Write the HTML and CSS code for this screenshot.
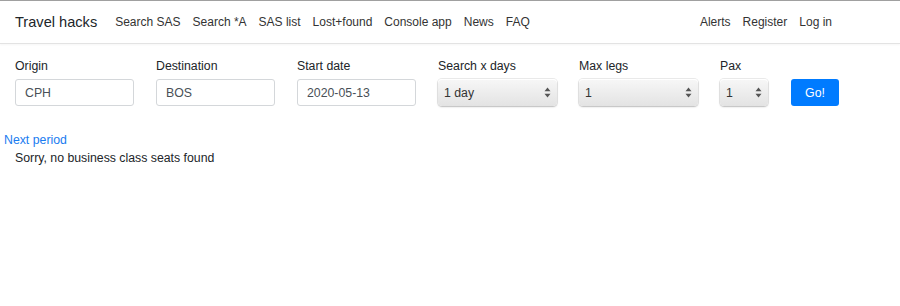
FILE: index.html
```html
<!DOCTYPE html>
<html lang="en">
<head>
    <meta charset="UTF-8">
    <meta name="viewport" content="width=device-width, initial-scale=1.0">
    <title>Travel hacks</title>
    <link rel="stylesheet" href="styles.css">
</head>
<body>
    <nav class="navbar">
        <a class="brand" href="#">Travel hacks</a>
        <ul class="nav-links">
            <li><a href="#">Search SAS</a></li>
            <li><a href="#">Search *A</a></li>
            <li><a href="#">SAS list</a></li>
            <li><a href="#">Lost+found</a></li>
            <li><a href="#">Console app</a></li>
            <li><a href="#">News</a></li>
            <li><a href="#">FAQ</a></li>
        </ul>
        <ul class="nav-links nav-right">
            <li><a href="#">Alerts</a></li>
            <li><a href="#">Register</a></li>
            <li><a href="#">Log in</a></li>
        </ul>
    </nav>

    <form class="search-form">
        <div class="field">
            <label for="origin">Origin</label>
            <input type="text" id="origin" value="CPH">
        </div>
        <div class="field">
            <label for="destination">Destination</label>
            <input type="text" id="destination" value="BOS">
        </div>
        <div class="field">
            <label for="start-date">Start date</label>
            <input type="text" id="start-date" value="2020-05-13">
        </div>
        <div class="field">
            <label for="days">Search x days</label>
            <div class="select-wrap">
                <select id="days">
                    <option>1 day</option>
                    <option>2 days</option>
                    <option>3 days</option>
                </select>
                <svg class="arrows" width="7" height="11" viewBox="0 0 7 11"><path d="M3.5 0.5 L6.5 4.2 L0.5 4.2 Z M3.5 10.5 L6.5 6.8 L0.5 6.8 Z" fill="#555"/></svg>
            </div>
        </div>
        <div class="field">
            <label for="legs">Max legs</label>
            <div class="select-wrap">
                <select id="legs">
                    <option>1</option>
                    <option>2</option>
                </select>
                <svg class="arrows" width="7" height="11" viewBox="0 0 7 11"><path d="M3.5 0.5 L6.5 4.2 L0.5 4.2 Z M3.5 10.5 L6.5 6.8 L0.5 6.8 Z" fill="#555"/></svg>
            </div>
        </div>
        <div class="field field-pax">
            <label for="pax">Pax</label>
            <div class="select-wrap">
                <select id="pax">
                    <option>1</option>
                    <option>2</option>
                </select>
                <svg class="arrows" width="7" height="11" viewBox="0 0 7 11"><path d="M3.5 0.5 L6.5 4.2 L0.5 4.2 Z M3.5 10.5 L6.5 6.8 L0.5 6.8 Z" fill="#555"/></svg>
            </div>
        </div>
        <div class="field field-btn">
            <button type="button" class="btn-go">Go!</button>
        </div>
    </form>

    <a class="next-period" href="#">Next period</a>
    <p class="no-results">Sorry, no business class seats found</p>
</body>
</html>
```

FILE: styles.css
```css
body {
    margin: 0;
    font-family: "Liberation Sans", Arial, sans-serif;
    font-size: 12.3px;
    color: #212529;
    background: #fff;
}

a {
    text-decoration: none;
}

.navbar {
    display: flex;
    align-items: center;
    height: 42px;
    padding: 0 15px;
    border-top: 1px solid #a0a0a0;
    border-bottom: 1px solid #e3e3e3;
    box-shadow: 0 1px 2px rgba(0, 0, 0, 0.04);
}

.brand {
    font-size: 14.6px;
    color: #212529;
    margin-right: 18px;
}

.nav-links {
    display: flex;
    list-style: none;
    margin: 0;
    padding: 0;
    gap: 12px;
    font-size: 12px;
}

.nav-links a {
    color: #333;
}

.nav-right {
    margin-left: auto;
    margin-right: 53px;
}

.search-form {
    display: flex;
    padding: 15px 15px 0;
}

.field {
    display: flex;
    flex-direction: column;
    width: 141px;
}

.field label {
    margin-bottom: 6px;
    color: #212529;
}

.field input,
.field select {
    box-sizing: border-box;
    width: 119px;
    height: 27px;
    font: inherit;
}

.field input {
    padding: 0 9px;
    border: 1px solid #d4d7da;
    border-radius: 3px;
    color: #495057;
}

.select-wrap {
    position: relative;
    width: 119px;
}

.field select {
    -webkit-appearance: none;
    appearance: none;
    padding: 0 6px;
    border: none;
    border-radius: 4px;
    color: #333;
    background: linear-gradient(#f7f7f7, #e3e3e3);
    box-shadow: 0 0 0 1px rgba(0, 0, 0, 0.08), 0 1px 2px rgba(0, 0, 0, 0.2), inset 0 1px 0 #fff;
}

.arrows {
    position: absolute;
    right: 6px;
    top: 8px;
    pointer-events: none;
}

.field-pax {
    width: 71px;
}

.field-pax .select-wrap,
.field-pax select {
    width: 48px;
}

.field-btn {
    justify-content: flex-end;
    width: auto;
}

.btn-go {
    width: 48px;
    height: 27px;
    border: none;
    border-radius: 3px;
    background: #007bff;
    color: #fff;
    font: inherit;
}

.next-period {
    display: block;
    margin: 27px 0 0 4px;
    color: #1a7cf0;
}

.no-results {
    margin: 4px 0 0 15px;
    color: #212529;
}
```
